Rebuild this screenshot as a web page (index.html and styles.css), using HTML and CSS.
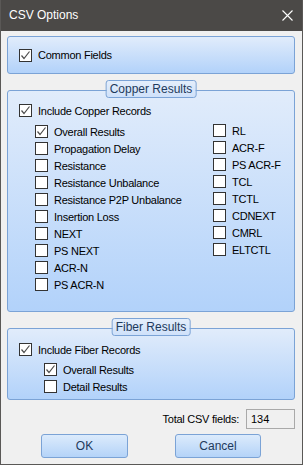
FILE: index.html
```html
<!DOCTYPE html>
<html lang="en">
<head>
  <meta charset="UTF-8">
  <title>CSV Options</title>
  <link rel="stylesheet" href="styles.css">
</head>
<body>

<div class="window">
  <div class="titlebar">
    <span class="title">CSV Options</span>
    <svg class="close" width="11" height="11" viewBox="0 0 11 11">
      <path d="M0.5 0.5 L10.5 10.5 M10.5 0.5 L0.5 10.5" stroke="#fff" stroke-width="1.1" fill="none"/>
    </svg>
  </div>

  <div class="content">
    <div class="panel common">
      <label class="check"><span class="box on"></span>Common Fields</label>
    </div>

    <div class="panel group copper">
      <div class="legend">Copper Results</div>
      <label class="check"><span class="box on"></span>Include Copper Records</label>
      <div class="cols">
        <div class="col left">
          <label class="check"><span class="box on"></span>Overall Results</label>
          <label class="check"><span class="box"></span>Propagation Delay</label>
          <label class="check"><span class="box"></span>Resistance</label>
          <label class="check"><span class="box"></span>Resistance Unbalance</label>
          <label class="check"><span class="box"></span>Resistance P2P Unbalance</label>
          <label class="check"><span class="box"></span>Insertion Loss</label>
          <label class="check"><span class="box"></span>NEXT</label>
          <label class="check"><span class="box"></span>PS NEXT</label>
          <label class="check"><span class="box"></span>ACR-N</label>
          <label class="check"><span class="box"></span>PS ACR-N</label>
        </div>
        <div class="col right">
          <label class="check"><span class="box"></span>RL</label>
          <label class="check"><span class="box"></span>ACR-F</label>
          <label class="check"><span class="box"></span>PS ACR-F</label>
          <label class="check"><span class="box"></span>TCL</label>
          <label class="check"><span class="box"></span>TCTL</label>
          <label class="check"><span class="box"></span>CDNEXT</label>
          <label class="check"><span class="box"></span>CMRL</label>
          <label class="check"><span class="box"></span>ELTCTL</label>
        </div>
      </div>
    </div>

    <div class="panel group fiber">
      <div class="legend">Fiber Results</div>
      <label class="check"><span class="box on"></span>Include Fiber Records</label>
      <div class="col sub">
        <label class="check"><span class="box on"></span>Overall Results</label>
        <label class="check"><span class="box"></span>Detail Results</label>
      </div>
    </div>

    <div class="total">
      <span>Total CSV fields:</span>
      <div class="field">134</div>
    </div>

    <div class="buttons">
      <button class="btn ok">OK</button>
      <button class="btn cancel">Cancel</button>
    </div>
  </div>
</div>

<script>
  // draw the tick into every checked box
  const tick = '<svg width="11" height="11" viewBox="0 0 11 11"><path d="M1.5 5.5 L4 8.5 L9.5 1.5" stroke="#4d4d4d" stroke-width="1.2" fill="none"/></svg>';
  document.querySelectorAll('.box.on').forEach(b => { b.innerHTML = tick; });
</script>
</body>
</html>
```

FILE: styles.css
```css
* {
  box-sizing: border-box;
}

body {
  margin: 0;
  font-family: 'Liberation Sans', Arial, sans-serif;
  font-size: 11px;
  color: #000;
}

.window {
  width: 303px;
  height: 465px;
  background-color: #f0f0f0;
  border: 1px solid #5a5856;
  border-top: none;
  overflow: hidden;
}

.titlebar {
  height: 31px;
  background-color: #4b4947;
  display: flex;
  align-items: center;
  justify-content: space-between;
  padding: 0 9px 1px 8px;
}

.title {
  color: #fff;
  font-size: 12px;
}

.content {
  padding: 5px 7px 0 6px;
}

.panel {
  border: 1px solid #7ba3d6;
  border-radius: 3px;
  background: linear-gradient(#e1ecfb, #b2d2fa);
}

.common {
  height: 38px;
  display: flex;
  align-items: center;
  padding-left: 11px;
}

.group {
  position: relative;
  margin-top: 16px;
  padding: 11px 0 0 11px;
}

.copper {
  height: 222px;
}

.fiber {
  height: 72px;
  padding-top: 12px;
}

.legend {
  position: absolute;
  top: -11px;
  left: 50%;
  transform: translateX(-50%);
  height: 18px;
  padding: 0 3px;
  line-height: 16px;
  font-size: 12px;
  color: #1e3a5c;
  white-space: nowrap;
  border: 1px solid #7ba3d6;
  border-radius: 3px;
  background: linear-gradient(#e4eefb, #cfe1fa);
}

.check {
  display: flex;
  align-items: center;
  height: 17px;
  gap: 6px;
  letter-spacing: -0.25px;
  white-space: nowrap;
}

.box {
  width: 13px;
  height: 13px;
  flex: none;
  background-color: #fff;
  border: 1px solid #333;
  display: flex;
  align-items: center;
  justify-content: center;
}

.cols {
  display: flex;
  margin-top: 4px;
}

.col {
  display: flex;
  flex-direction: column;
}

.col.left {
  padding-left: 16px;
  width: 194px;
}

.col.right {
  margin-top: -1px;
}

.col.sub {
  padding-left: 25px;
  margin-top: 3px;
}

.total {
  display: flex;
  justify-content: flex-end;
  align-items: center;
  gap: 7px;
  margin-top: 9px;
  letter-spacing: -0.25px;
}

.field {
  width: 49px;
  height: 20px;
  border: 1px solid #a9a9a9;
  background-color: #f0f0f0;
  padding-left: 4px;
  line-height: 18px;
  letter-spacing: 0;
}

.buttons {
  display: flex;
  margin-top: 5px;
  padding-left: 34px;
  gap: 47px;
}

.btn {
  width: 87px;
  height: 24px;
  font-family: 'Liberation Sans', Arial, sans-serif;
  font-size: 12px;
  color: #1e3a5c;
  border: 1px solid #7ba3d6;
  border-radius: 3px;
  background: linear-gradient(#dcebfc, #b4d3f8);
  padding: 0;
}

.cancel {
  width: 86px;
}
```
